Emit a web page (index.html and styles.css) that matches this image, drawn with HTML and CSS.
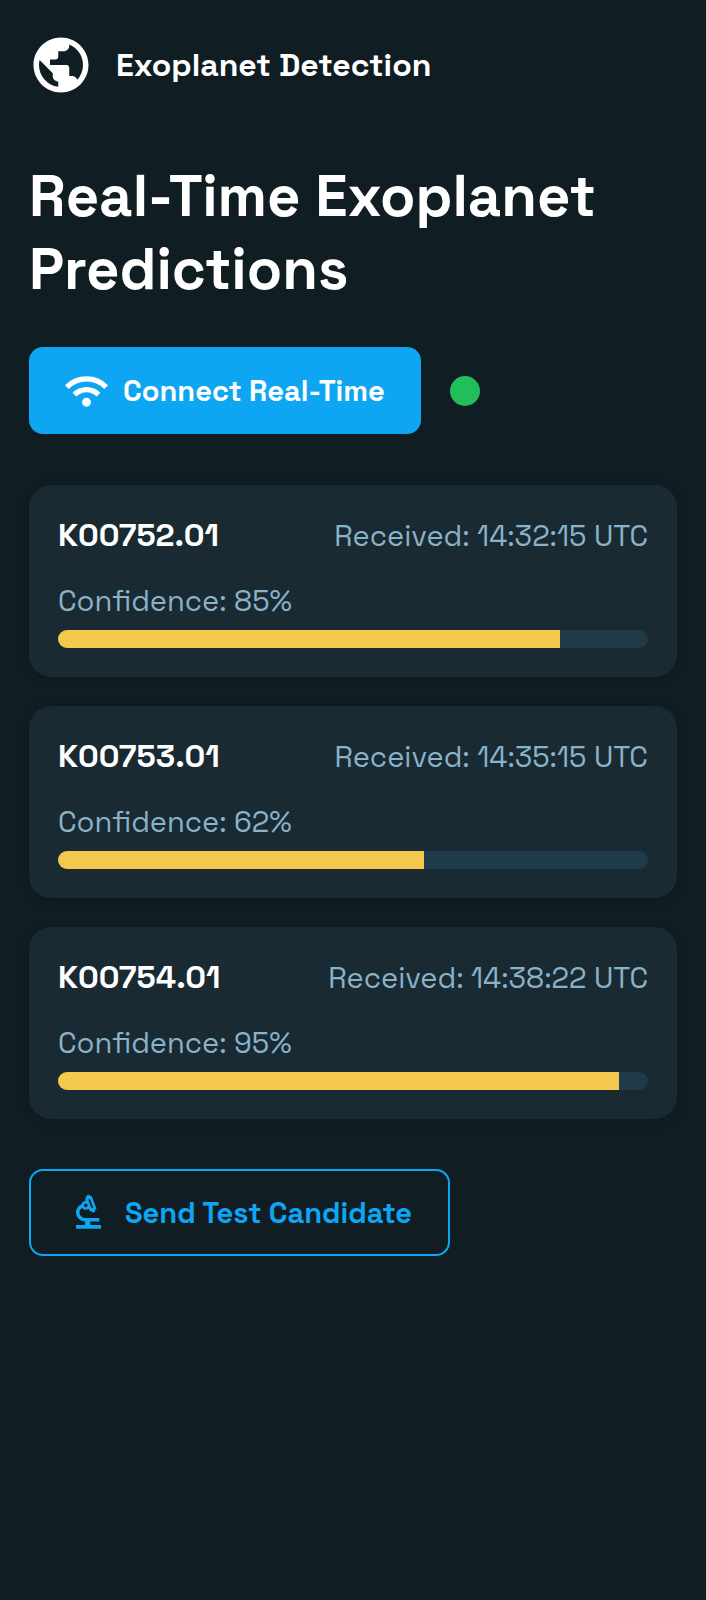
FILE: index.html
```html
<!DOCTYPE html>
<html lang="en">
<head>
<meta charset="utf-8">
<meta name="viewport" content="width=device-width, initial-scale=1">
<title>Exoplanet Detection</title>
<link rel="stylesheet" href="styles.css">
</head>
<body>
<header class="site-header">
  <svg class="logo" viewBox="0 0 24 24" aria-hidden="true"><path d="M12 2C6.48 2 2 6.48 2 12s4.48 10 10 10 10-4.48 10-10S17.52 2 12 2zm-1 17.93c-3.95-.49-7-3.85-7-7.93 0-.62.08-1.21.21-1.79L9 15v1c0 1.1.9 2 2 2v1.93zm6.9-2.54c-.26-.81-1-1.39-1.9-1.39h-1v-3c0-.55-.45-1-1-1H8v-2h2c.55 0 1-.45 1-1V7h2c1.1 0 2-.9 2-2v-.41c2.93 1.19 5 4.06 5 7.41 0 2.08-.8 3.97-2.1 5.39z"/></svg>
  <span class="brand">Exoplanet Detection</span>
</header>
<main class="content">
  <h1 class="page-title">Real-Time Exoplanet Predictions</h1>
  <div class="connection">
    <button class="button button-primary" type="button">
      <svg class="icon" viewBox="0 -960 960 960" aria-hidden="true"><path d="M480-120q-42 0-71-29t-29-71q0-42 29-71t71-29q42 0 71 29t29 71q0 42-29 71t-71 29ZM254-346l-84-86q59-59 138.500-93.500T480-560q92 0 171.500 35T790-430l-84 84q-44-44-102-69t-124-25q-66 0-124 25t-102 69ZM84-516 0-600q92-94 215-147t265-53q142 0 265 53t215 147l-84 84q-77-77-178.500-120.500T480-680q-116 0-217.500 43.500T84-516Z"/></svg>
      <span>Connect Real-Time</span>
    </button>
    <span class="status" role="img" aria-label="Connected"></span>
  </div>
  <section class="predictions">
    <article class="card">
      <div class="card-head"><h2 class="candidate">K00752.01</h2><p class="meta">Received: 14:32:15 UTC</p></div>
      <p class="meta">Confidence: 85%</p>
      <div class="track"><div class="fill" style="width: 85%"></div></div>
    </article>
    <article class="card">
      <div class="card-head"><h2 class="candidate">K00753.01</h2><p class="meta">Received: 14:35:15 UTC</p></div>
      <p class="meta">Confidence: 62%</p>
      <div class="track"><div class="fill" style="width: 62%"></div></div>
    </article>
    <article class="card">
      <div class="card-head"><h2 class="candidate">K00754.01</h2><p class="meta">Received: 14:38:22 UTC</p></div>
      <p class="meta">Confidence: 95%</p>
      <div class="track"><div class="fill" style="width: 95%"></div></div>
    </article>
  </section>
  <button class="button button-outline" type="button">
    <svg class="icon" viewBox="0 -960 960 960" aria-hidden="true"><path d="M200-120v-80h200v-80q-83 0-141.500-58.500T200-480q0-61 33.500-111t90.500-73q8-34 35.500-55t62.500-21l-22-62 38-14-14-36 76-28 12 38 38-14 110 300-38 14 14 38-76 28-12-38-38 14-24-66q-15 14-34.500 21t-39.500 5q-22-2-41-13.500T338-582q-27 16-42.500 43T280-480q0 50 35 85t85 35h320v80H520v80h240v80H200Zm346-458 36-14-68-188-38 14 70 188Zm-126-22q17 0 28.500-11.500T460-640q0-17-11.500-28.500T420-680q-17 0-28.500 11.500T380-640q0 17 11.500 28.500T420-600Z"/></svg>
    <span>Send Test Candidate</span>
  </button>
</main>
</body>
</html>
```

FILE: styles.css
```css
* { box-sizing: border-box; }

body {
  margin: 0;
  min-height: 100vh;
  background: #101d22;
  color: #fff;
  font-family: "Space Grotesk", Inter, "Liberation Sans", sans-serif;
}

h1, h2, p { margin: 0; }

.site-header {
  display: flex;
  align-items: center;
  gap: 22px;
  padding: 32px 28px;
}

.logo {
  flex: none;
  width: 66px;
  height: 66px;
  fill: #fff;
}

.brand {
  font-size: 32px;
  font-weight: 600;
  line-height: 40px;
}

.content { padding: 30px 29px; }

.page-title {
  font-size: 58px;
  font-weight: 700;
  line-height: 73px;
}

.connection {
  display: flex;
  align-items: center;
  gap: 29px;
  margin: 41px 0 51px;
}

.button {
  display: flex;
  align-items: center;
  gap: 15px;
  min-height: 87px;
  padding: 18px 36px;
  border: 0;
  border-radius: 14px;
  font-family: inherit;
  font-size: 29px;
  font-weight: 700;
  line-height: 40px;
}

.button-primary {
  background: #0ea5f3;
  color: #fff;
}

.button-outline {
  border: 2px solid #0ea5f3;
  background: transparent;
  color: #0ea5f3;
}

.icon {
  flex: none;
  width: 43px;
  height: 43px;
  fill: currentColor;
}

.status {
  width: 30px;
  height: 30px;
  border-radius: 50%;
  background: #22be5c;
}

.predictions {
  display: grid;
  gap: 29px;
  margin-bottom: 50px;
}

.card {
  padding: 29px;
  border-radius: 22px;
  background: #192a33;
  box-shadow: 0 2px 12px rgba(0, 0, 0, 0.1);
}

.card-head {
  display: flex;
  align-items: center;
  justify-content: space-between;
  margin-bottom: 24px;
}

.candidate {
  font-size: 32px;
  font-weight: 700;
  line-height: 42px;
}

.meta {
  color: #8ab2c9;
  font-size: 29px;
  line-height: 41px;
}

.track {
  height: 18px;
  margin-top: 9px;
  overflow: hidden;
  border-radius: 9px;
  background: #1f3a49;
}

.fill {
  height: 100%;
  background: #f4c84c;
}
```
